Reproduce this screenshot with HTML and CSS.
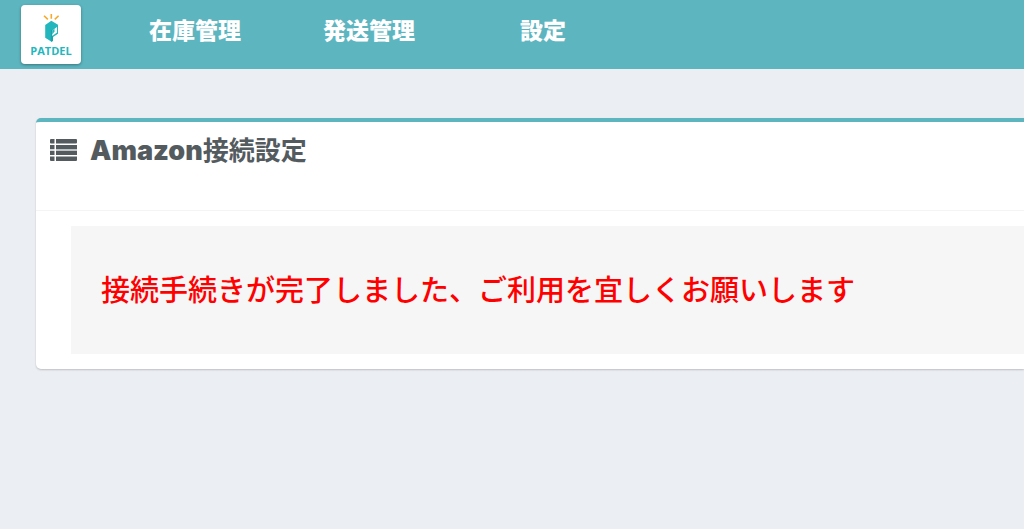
FILE: index.html
```html
<!DOCTYPE html>
<html lang="ja">
<head>
<meta charset="utf-8">
<meta name="viewport" content="width=device-width, initial-scale=1">
<title>Amazon接続設定 | PATDEL</title>
<link rel="stylesheet" href="styles.css">
</head>
<body>
<header class="header">
  <a class="logo" href="#">
    <svg class="logo-mark" viewBox="0 0 20 30" aria-hidden="true">
      <path stroke="#f7a928" stroke-width="1.600" fill="none" d="M10.300 1v4.800M3 2.700l3.800 3.700M17.600 2.700l-3.800 3.700"/>
      <path fill="#23b7bd" d="M10.300 7.700L4.200 12v12.700l6.400 4 1.400-1v-3.600l5-3.300v-9.100z"/>
      <path fill="#1ba3aa" d="M9.800 17v11.200l.8.500 1.400-1V17z"/>
      <path fill="#fff" d="M11.200 17.400l4.800-3.300v5.500l-4.800 3.300z"/>
      <path fill="#23b7bd" d="M11.200 17.400l2.300-1.600v2.700l-2.300 3z"/>
    </svg>
    <span class="logo-name">PATDEL</span>
  </a>
  <nav class="nav">
    <a class="nav-link" href="#">在庫管理</a>
    <a class="nav-link" href="#">発送管理</a>
    <a class="nav-link" href="#">設定</a>
  </nav>
</header>
<main class="content">
  <section class="box">
    <div class="box-header">
      <svg class="list-icon" viewBox="0 0 27 22" aria-hidden="true">
        <path fill="#535b5f" d="M1 0h3.500v4.500H1a1 1 0 0 1-1-1V1a1 1 0 0 1 1-1zM6 0h20a1 1 0 0 1 1 1v2.500a1 1 0 0 1-1 1H6zM0 6h4.500v4.300H0zM6 6h21v4.300H6zM0 11.700h4.500V16H0zM6 11.700h21V16H6zM0 17.500h4.500V22H1a1 1 0 0 1-1-1zM6 17.500h21V21a1 1 0 0 1-1 1H6z"/>
        <path fill="#b9bcbf" d="M6 10.300h21v1.400H6z"/>
      </svg>
      <h1 class="box-title"><span class="box-title-brand">Amazon</span>接続設定</h1>
    </div>
    <div class="box-body">
      <p class="message">接続手続きが完了しました、ご利用を宜しくお願いします</p>
    </div>
  </section>
</main>
</body>
</html>
```
FILE: styles.css
```css
* { box-sizing: border-box; }

body {
  margin: 0;
  min-height: 100vh;
  overflow-x: hidden;
  background: #ebeef3;
  color: #535b5f;
  font-family: Inter, "Noto Sans CJK JP", sans-serif;
}

.header {
  display: flex;
  align-items: flex-start;
  gap: 27px;
  padding: 5px 21px;
  background: #5cb5bf;
}

.logo {
  display: flex;
  flex-direction: column;
  align-items: center;
  width: 60px;
  height: 59px;
  padding-top: 8px;
  border-radius: 4px;
  background: #fff;
  box-shadow: 0 1px 3px rgba(0, 0, 0, 0.35);
  color: #23b7bd;
  text-decoration: none;
}

.logo-mark {
  width: 20px;
  height: 30px;
}

.logo-name {
  font: 700 11px/16px "Open Sans", sans-serif;
}

.nav { display: flex; }

.nav-link {
  width: 174px;
  padding-top: 8px;
  color: #fff;
  font-size: 23px;
  font-weight: 900;
  line-height: 36px;
  text-align: center;
  text-decoration: none;
}

.content { padding: 49px 0 0 36px; }

.box {
  border-top: 4px solid #5cb5bf;
  border-radius: 5px 0 0 5px;
  background: #fff;
  box-shadow: 0 1px 2px rgba(0, 0, 0, 0.2);
}

.box-header {
  display: flex;
  align-items: flex-start;
  gap: 13px;
  padding: 10px 14px 40px;
  border-bottom: 1px solid #f4f4f4;
}

.list-icon {
  width: 27px;
  height: 22px;
  margin-top: 7px;
}

.box-title {
  margin: 0;
  font-size: 26px;
  font-weight: 700;
  line-height: 38px;
}

.box-title-brand {
  font-size: 27px;
  font-weight: 900;
}

.box-body { padding: 15px 0 15px 35px; }

.message {
  margin: 0;
  padding: 40px 30px 44px;
  background: #f6f6f6;
  color: #f00;
  font-family: "Noto Sans CJK JP", sans-serif;
  font-size: 29px;
  font-weight: 500;
  line-height: 44px;
}
```
